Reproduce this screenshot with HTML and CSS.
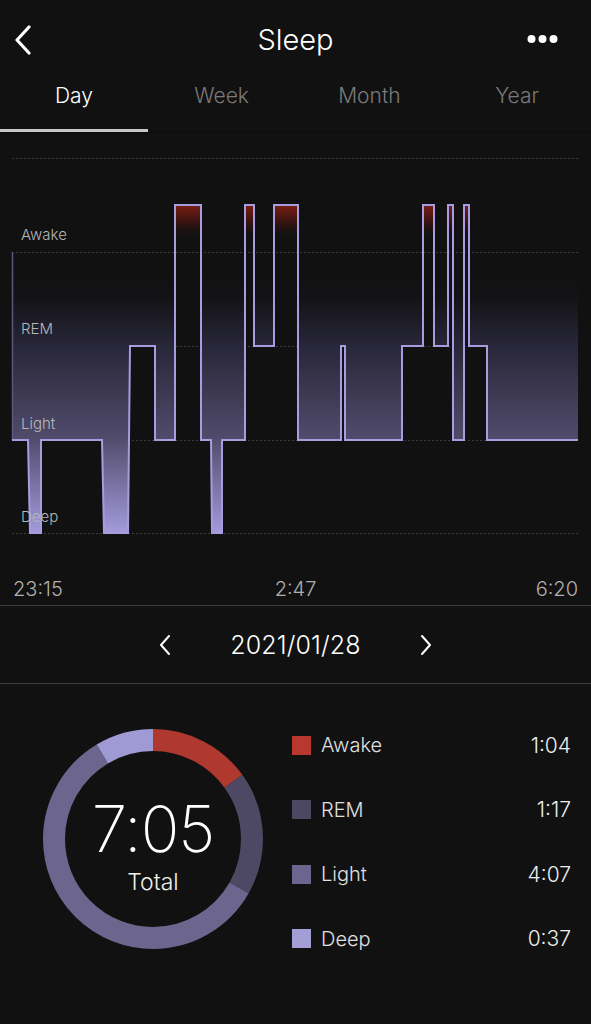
FILE: index.html
```html
<!DOCTYPE html>
<html>
<head>
<meta charset="utf-8">
<link rel="stylesheet" href="styles.css">
</head>
<body>
<div class="app">
  <header class="topbar">
    <div class="back">
      <svg width="22" height="30" viewBox="0 0 22 30"><path d="M17 2 L5 15 L17 28" fill="none" stroke="#fff" stroke-width="3.2" stroke-linecap="round" stroke-linejoin="round"/></svg>
    </div>
    <h1 class="title">Sleep</h1>
    <div class="more">
      <svg width="32" height="10" viewBox="0 0 32 10"><circle cx="4.5" cy="5" r="4" fill="#fff"/><circle cx="15.5" cy="5" r="4" fill="#fff"/><circle cx="26.5" cy="5" r="4" fill="#fff"/></svg>
    </div>
  </header>

  <nav class="tabs">
    <div class="tab active">Day</div>
    <div class="tab">Week</div>
    <div class="tab">Month</div>
    <div class="tab">Year</div>
  </nav>

  <section class="chart">
    <svg class="chart-svg" width="591" height="430" viewBox="0 133 591 430">
      <defs>
        <linearGradient id="gAbove" x1="0" y1="252" x2="0" y2="533" gradientUnits="userSpaceOnUse">
          <stop offset="0" stop-color="#111" stop-opacity="0"/>
          <stop offset="0.16" stop-color="#131316" stop-opacity="1"/>
          <stop offset="0.34" stop-color="#29273a"/>
          <stop offset="0.66" stop-color="#514b6b"/>
          <stop offset="1" stop-color="#a39bdb"/>
        </linearGradient>
        <linearGradient id="gRed" x1="0" y1="205" x2="0" y2="240" gradientUnits="userSpaceOnUse">
          <stop offset="0" stop-color="#7a1e14"/>
          <stop offset="0.45" stop-color="#3e1410"/>
          <stop offset="1" stop-color="#111" stop-opacity="0"/>
        </linearGradient>
      </defs>
      <g class="grid">
        <line x1="12" y1="158.5" x2="578" y2="158.5"/>
        <line x1="12" y1="252.5" x2="578" y2="252.5"/>
        <line x1="12" y1="346.5" x2="578" y2="346.5"/>
        <line x1="12" y1="440.5" x2="578" y2="440.5"/>
        <line x1="12" y1="533.5" x2="578" y2="533.5"/>
      </g>
      <path d="M12 440 H28 L30 533 H41 V440 H102 L104 533 H128 L130 346 H155 V440 H175 V205 H201 V440 H211 L212 533 H222 V440 H245 V205 H254 V346 H274 V205 H298 V440 H341 V346 H345 V440 H402 V346 H423 V205 H434 V346 H448 V205 H453 V440 H464 V205 H469 V346 H487 V440 H578 V252 H12 Z" fill="url(#gAbove)"/>
      <path d="M175 440 V205 H201 V440 Z M245 440 V205 H254 V346 H274 V205 H298 V440 Z M423 346 V205 H434 V346 Z M448 440 V205 H453 V440 Z M464 440 V205 H469 V346 Z" fill="url(#gRed)"/>
      <line x1="12.5" y1="252" x2="12.5" y2="440" stroke="#5d577c" stroke-width="1.5"/>
      <path class="curve" d="M12 440 H28 L30 533 H41 V440 H102 L104 533 H128 L130 346 H155 V440 H175 V205 H201 V440 H211 L212 533 H222 V440 H245 V205 H254 V346 H274 V205 H298 V440 H341 V346 H345 V440 H402 V346 H423 V205 H434 V346 H448 V205 H453 V440 H464 V205 H469 V346 H487 V440 H578"/>
      <g class="ylabels">
        <text x="21" y="240">Awake</text>
        <text x="21" y="334">REM</text>
        <text x="21" y="429">Light</text>
        <text x="21" y="522">Deep</text>
      </g>
    </svg>
    <div class="times">
      <span class="t-left">23:15</span>
      <span class="t-mid">2:47</span>
      <span class="t-right">6:20</span>
    </div>
  </section>

  <section class="datenav">
    <svg width="14" height="22" viewBox="0 0 14 22"><path d="M11 2 L3 11 L11 20" fill="none" stroke="#fff" stroke-width="2" stroke-linecap="round" stroke-linejoin="round"/></svg>
    <span class="date">2021/01/28</span>
    <svg width="14" height="22" viewBox="0 0 14 22"><path d="M3 2 L11 11 L3 20" fill="none" stroke="#fff" stroke-width="2" stroke-linecap="round" stroke-linejoin="round"/></svg>
  </section>

  <section class="summary">
    <div class="donut">
      <svg width="220" height="220" viewBox="0 0 220 220">
        <g transform="rotate(-90 110 110)" fill="none" stroke-width="22">
          <circle cx="110" cy="110" r="99" stroke="#b0392f" stroke-dasharray="93.67 622.04" stroke-dashoffset="0"/>
          <circle cx="110" cy="110" r="99" stroke="#4d4964" stroke-dasharray="112.70 622.04" stroke-dashoffset="-93.67"/>
          <circle cx="110" cy="110" r="99" stroke="#6c668e" stroke-dasharray="361.51 622.04" stroke-dashoffset="-206.37"/>
          <circle cx="110" cy="110" r="99" stroke="#a09ad4" stroke-dasharray="54.16 622.04" stroke-dashoffset="-567.88"/>
        </g>
      </svg>
      <div class="donut-center">
        <div class="total-time">7:05</div>
        <div class="total-label">Total</div>
      </div>
    </div>
    <ul class="legend">
      <li class="row"><span class="sw awake"></span><span class="name">Awake</span><span class="val">1:04</span></li>
      <li class="row"><span class="sw rem"></span><span class="name">REM</span><span class="val">1:17</span></li>
      <li class="row"><span class="sw light"></span><span class="name">Light</span><span class="val">4:07</span></li>
      <li class="row"><span class="sw deep"></span><span class="name">Deep</span><span class="val">0:37</span></li>
    </ul>
  </section>
</div>
</body>
</html>
```

FILE: styles.css
```css
* { box-sizing: border-box; }
html, body {
  margin: 0;
  padding: 0;
  background: #111111;
}
body {
  font-family: Inter, "Liberation Sans", sans-serif;
  font-weight: 300;
  color: #fff;
  width: 591px;
  height: 1024px;
  overflow: hidden;
}
.app { width: 591px; }

.topbar {
  height: 78px;
  display: grid;
  grid-template-columns: 1fr auto 1fr;
  align-items: center;
}
.back { padding-left: 12px; display: flex; align-items: center; padding-top: 2px; }
.title {
  margin: 0;
  font-size: 29px;
  font-weight: 300;
  letter-spacing: 0;
}
.more { display: flex; justify-content: flex-end; padding-right: 32px; }

.tabs {
  height: 55px;
  display: grid;
  grid-template-columns: repeat(4, 1fr);
  border-bottom: 1px solid #0c0c0c;
}
.tab {
  text-align: center;
  font-size: 21px;
  color: #7a7a7a;
  padding-top: 6px;
  line-height: 24px;
}
.tab.active {
  color: #fff;
  border-bottom: 3px solid #c8c8c8;
}

.chart {
  height: 473px;
  border-bottom: 1.5px solid #3c3c3c;
  display: flex;
  flex-direction: column;
}
.chart-svg { display: block; }
.grid line {
  stroke: #3a3a3a;
  stroke-width: 1;
  stroke-dasharray: 2 2;
}
.curve {
  fill: none;
  stroke: #a59de0;
  stroke-width: 2;
  stroke-linejoin: miter;
}
.ylabels text {
  font-family: Inter, "Liberation Sans", sans-serif;
  font-size: 15px;
  font-weight: 300;
  fill: #b8b8b8;
}
.times {
  display: grid;
  grid-template-columns: 1fr auto 1fr;
  padding: 0 13px 0 13px;
  font-size: 20px;
  color: #b0b0b0;
  line-height: 24px;
  margin-top: 14px;
}
.t-mid { text-align: center; }
.t-right { text-align: right; }

.datenav {
  height: 78px;
  border-bottom: 1.5px solid #3c3c3c;
  display: flex;
  align-items: center;
  justify-content: center;
  gap: 58px;
}
.date {
  font-size: 25px;
  color: #fff;
  letter-spacing: 0.1px;
}

.summary {
  display: flex;
  align-items: flex-start;
  padding: 45px 20px 0 43px;
}
.donut {
  position: relative;
  width: 220px;
  height: 220px;
  flex: none;
}
.donut svg { display: block; }
.donut-center {
  position: absolute;
  inset: 0;
  display: flex;
  flex-direction: column;
  align-items: center;
  justify-content: center;
  padding-top: 12px;
}
.total-time {
  font-size: 64px;
  font-weight: 200;
  line-height: 70px;
  letter-spacing: -1px;
}
.total-label {
  font-size: 23px;
  line-height: 28px;
  margin-top: 4px;
  color: #f0f0f0;
}

.legend {
  list-style: none;
  margin: -16px 0 0 29px;
  padding: 0;
  flex: 1;
}
.row {
  height: 64.5px;
  display: flex;
  align-items: center;
  font-size: 20px;
}
.sw {
  width: 19px;
  height: 19px;
  margin-right: 10px;
  flex: none;
}
.sw.awake { background: #b8372f; }
.sw.rem { background: #4c4862; }
.sw.light { background: #6b6690; }
.sw.deep { background: #a49ed6; }
.name { color: #e0e0e0; flex: 1; }
.val { color: #eeeeee; font-size: 21px; }
```
